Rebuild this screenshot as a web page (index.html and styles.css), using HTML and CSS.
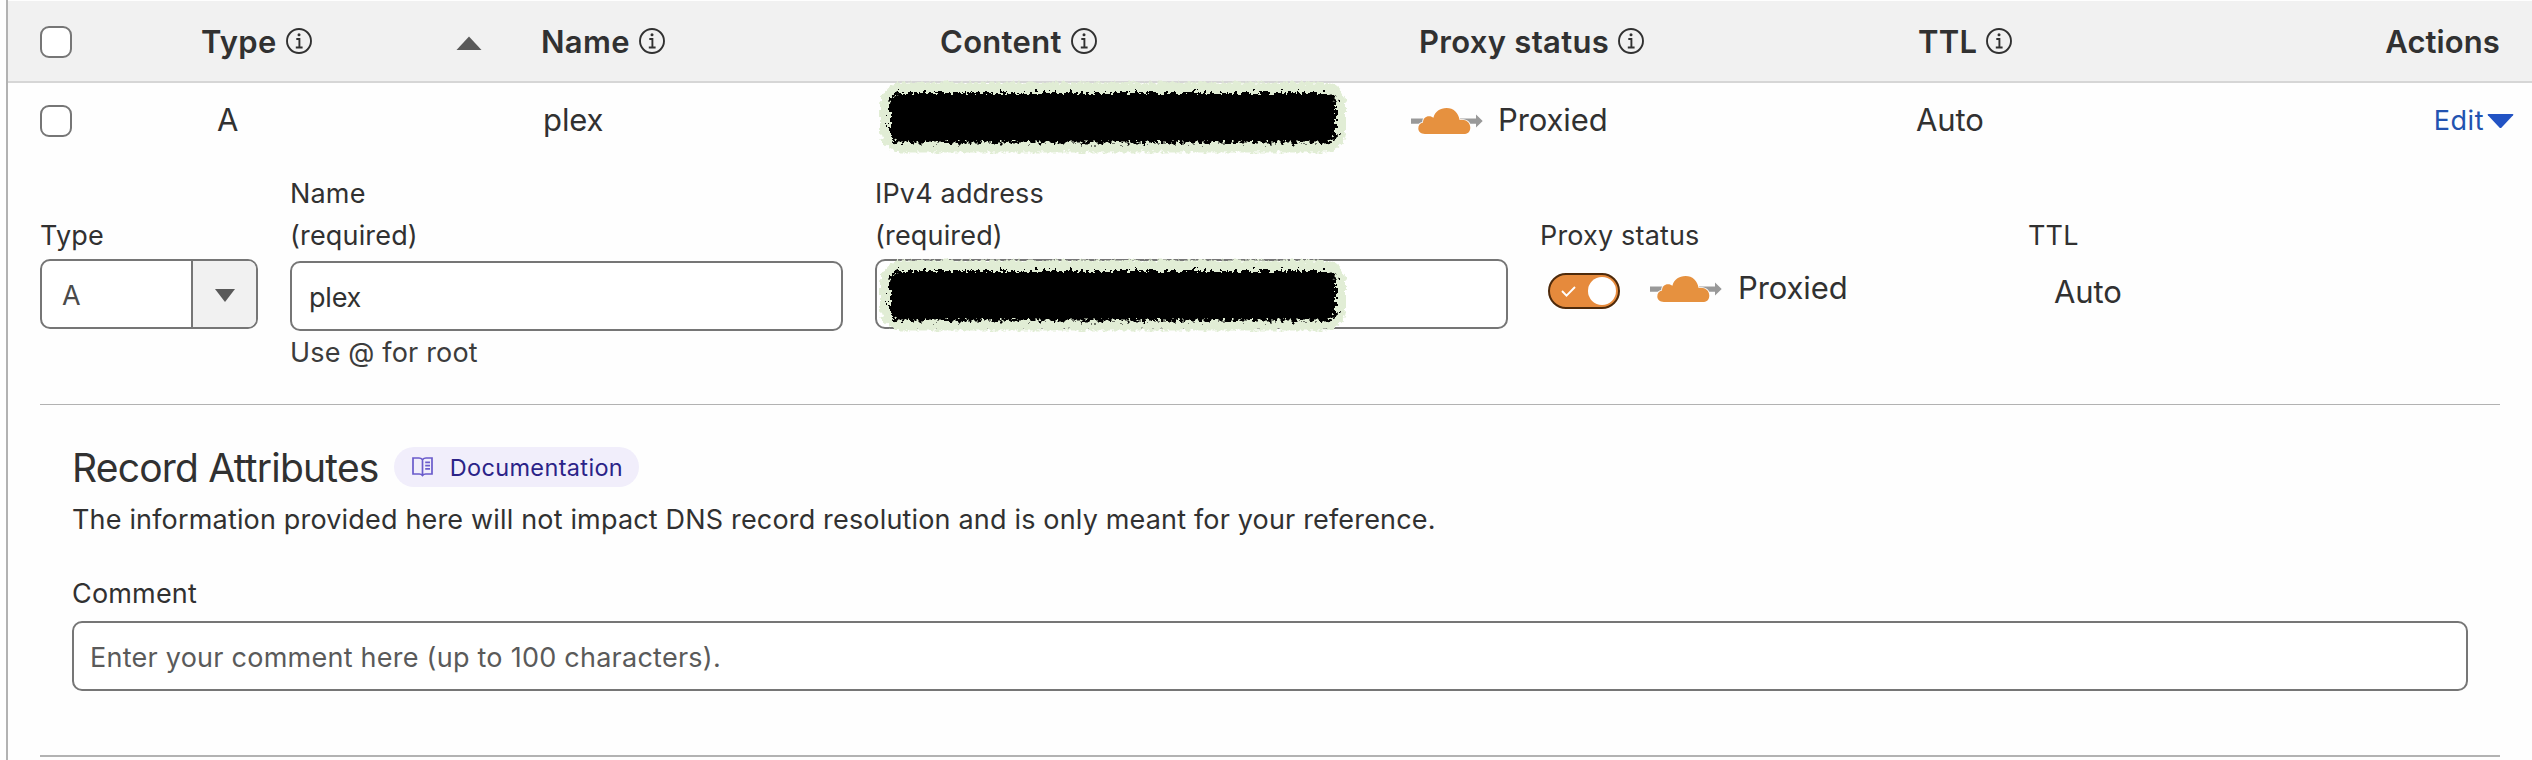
FILE: index.html
```html
<!DOCTYPE html>
<html lang="en">
<head>
<meta charset="utf-8">
<title>DNS records</title>
<link rel="stylesheet" href="styles.css">
</head>
<body>
<svg class="defs" width="0" height="0" aria-hidden="true">
  <defs>
    <symbol id="info" viewBox="0 0 26 26">
      <circle cx="13" cy="13" r="12" fill="none" stroke="#313131" stroke-width="1.9"/>
      <path d="M10.3 11h3.1v8.2M9.8 19.5h6.8" fill="none" stroke="#313131" stroke-width="1.9"/>
      <circle cx="13" cy="6.8" r="1.5" fill="#313131"/>
    </symbol>
    <symbol id="cloud" viewBox="0 -1 72 28">
      <path d="M0 10.5h65V6.4l6.7 6.5-6.7 6.5v-3.7H0z" fill="#999"/>
      <path d="M14 25.9C9.6 25.9 7.3 23.5 7.3 20.5C7.3 17.3 9 15 12 14.6C12 10.5 14.5 8.2 18 8.2C20 8.2 21.3 8.8 22.4 9.8C24 3.5 29 0 35.6 0C42.5 0 47.3 4.6 48.6 11.9C55 11 59.3 14.5 59.3 19.6C59.3 23 57.5 25.9 54 25.9Z" fill="#e6913f" stroke="#fff" stroke-width="1.6" paint-order="stroke"/>
    </symbol>
    <filter id="rough-edge" x="-5%" y="-25%" width="110%" height="150%" color-interpolation-filters="sRGB">
      <feTurbulence type="fractalNoise" baseFrequency="0.22" numOctaves="3" seed="4"/>
      <feDisplacementMap in="SourceGraphic" scale="8" xChannelSelector="R" yChannelSelector="G"/>
    </filter>
    <filter id="rough-core" x="-5%" y="-25%" width="110%" height="150%" color-interpolation-filters="sRGB">
      <feTurbulence type="fractalNoise" baseFrequency="0.26" numOctaves="3" seed="9"/>
      <feDisplacementMap in="SourceGraphic" scale="14" xChannelSelector="R" yChannelSelector="G"/>
    </filter>
    <symbol id="scribble" viewBox="0 0 470 74">
      <rect x="3" y="2.500" width="466" height="70" rx="22" fill="#e1edd5" filter="url(#rough-edge)"/>
      <rect x="13" y="13" width="446" height="49.500" rx="9" fill="#000" filter="url(#rough-core)"/>
      <rect x="15" y="15" width="441" height="45" rx="8" fill="#000"/>
    </symbol>
  </defs>
</svg>

<main class="panel">
  <header class="row head">
    <div class="cell check"><span class="checkbox"></span></div>
    <div class="cell type"><span>Type</span><svg class="info"><use href="#info"/></svg><svg class="sort" viewBox="0 0 26 14"><path d="M13 0.5 25.5 14H.5z" fill="#595959"/></svg></div>
    <div class="cell name"><span>Name</span><svg class="info"><use href="#info"/></svg></div>
    <div class="cell content"><span>Content</span><svg class="info"><use href="#info"/></svg></div>
    <div class="cell proxy"><span>Proxy status</span><svg class="info"><use href="#info"/></svg></div>
    <div class="cell ttl"><span>TTL</span><svg class="info"><use href="#info"/></svg></div>
    <div class="cell actions"><span>Actions</span></div>
  </header>

  <section class="row record">
    <div class="cell check"><span class="checkbox"></span></div>
    <div class="cell type"><span>A</span></div>
    <div class="cell name"><span>plex</span></div>
    <div class="cell content"><svg class="scribble"><use href="#scribble"/></svg></div>
    <div class="cell proxy"><svg class="cloud"><use href="#cloud"/></svg><span>Proxied</span></div>
    <div class="cell ttl"><span>Auto</span></div>
    <div class="cell actions"><a class="edit"><span>Edit</span><svg class="caret" viewBox="0 0 27 14"><path d="M1.5 0h24q1.500 0 .6 1.200L14.600 13.400q-1.100 1.100-2.200 0L.9 1.200Q0 0 1.500 0z" fill="#2253c4"/></svg></a></div>
  </section>

  <section class="form">
    <div class="field f-type">
      <label class="label single">Type</label>
      <div class="select"><span class="value">A</span><span class="arrow"><svg viewBox="0 0 20 13" width="20" height="13"><path d="M0 0h20L10 13z" fill="#595959"/></svg></span></div>
    </div>
    <div class="field f-name">
      <label class="label">Name<br>(required)</label>
      <div class="input">plex</div>
      <div class="help">Use @ for root</div>
    </div>
    <div class="field f-ip">
      <label class="label">IPv4 address<br>(required)</label>
      <div class="input"><svg class="scribble"><use href="#scribble"/></svg></div>
    </div>
    <div class="field f-proxy">
      <label class="label single">Proxy status</label>
      <div class="toggle-line">
        <span class="toggle"><svg class="tick" viewBox="0 0 15 11"><path d="M1 5 5.500 9.600 14 1" fill="none" stroke="#fff" stroke-width="1.9"/></svg><span class="knob"></span></span>
        <svg class="cloud"><use href="#cloud"/></svg>
        <span class="big">Proxied</span>
      </div>
    </div>
    <div class="field f-ttl">
      <label class="label single">TTL</label>
      <div class="big auto">Auto</div>
    </div>
  </section>

  <section class="attributes">
    <div class="title-line">
      <h2 class="title">Record Attributes</h2>
      <a class="pill">
        <svg class="book" viewBox="0 0 21 20"><path d="M10.500 2.600Q9 1 7 1H1v16h6.300q2 0 3.200 1.400Q11.700 17 13.700 17H20V1h-6q-2 0-3.500 1.600zM10.500 2.600v16M13.200 5.300H18M13.200 8.600H18M13.200 11.900H18" fill="none" stroke="#6a5bcb" stroke-width="1.7"/></svg>
        <span>Documentation</span>
      </a>
    </div>
    <p class="text">The information provided here will not impact DNS record resolution and is only meant for your reference.</p>
    <label class="text comment-label">Comment</label>
    <div class="input comment">Enter your comment here (up to 100 characters).</div>
  </section>
</main>
</body>
</html>
```

FILE: styles.css
```css
* { box-sizing: border-box; }

body {
  margin: 0;
  background: #fefefe;
  color: #313131;
  font-family: Inter, "Liberation Sans", sans-serif;
  font-size: 27px;
  line-height: 42px;
  letter-spacing: 0.17px;
}

.defs { display: block; position: absolute; }

.panel {
  width: 2526px;
  height: 760px;
  margin-left: 6px;
  border-left: 2px solid #b2b2b2;
  padding-top: 1px;
  overflow: hidden;
}

/* Table rows */
.row {
  display: grid;
  grid-template-columns: 160px 340px 362px 502px 512px 1fr 300px;
  padding-left: 32px;
  font-size: 31px;
  letter-spacing: 0;
}

.cell { display: flex; align-items: center; white-space: nowrap; }

.head {
  height: 82px;
  padding-top: 2px;
  background: #f1f1f1;
  border-bottom: 2px solid #d6d6d6;
  font-weight: 600;
  letter-spacing: 0.3px;
}

.head .type { padding-left: 1px; }
.head .name { padding-left: 1px; }
.head .content { padding-left: 38px; }
.head .proxy { padding-left: 15px; }
.head .ttl { padding-left: 2px; }
.head .actions { justify-content: flex-end; padding-right: 32px; letter-spacing: 0.1px; }

.record { height: 76px; }
.record .cell > span:not(.checkbox) { margin-top: -2px; }
.record .type { padding-left: 17px; }
.record .name { padding-left: 3px; }
.record .name, .record .proxy, .record .ttl, .big { letter-spacing: -0.1px; }
.record .proxy { gap: 15px; padding-left: 7px; }
.record .actions { justify-content: flex-end; padding-right: 18px; }

.checkbox {
  width: 32px;
  height: 32px;
  border: 2px solid #767676;
  border-radius: 9px;
  background: #fff;
}

.info { width: 26px; height: 26px; margin: -2px 0 0 9px; }
.sort { width: 26px; height: 14px; margin-left: 144px; margin-top: 2px; }
.cloud { width: 72px; height: 28px; flex: none; }
.scribble { width: 470px; height: 74px; flex: none; overflow: visible; }
.record .scribble { margin-top: -8px; margin-left: -25px; }

.edit { display: flex; align-items: center; color: #2253b0; font-size: 27px; letter-spacing: 0.5px; }
.caret { width: 27px; height: 14px; margin-left: 3px; }

/* Record form */
.form {
  display: flex;
  align-items: flex-start;
  height: 246px;
  margin: 0 32px;
  padding-top: 14px;
  border-bottom: 1px solid #b2b2b2;
}

.field { flex: none; }
.f-type { width: 218px; margin-right: 32px; }
.f-name { width: 553px; margin-right: 32px; }
.f-ip { width: 633px; margin-right: 32px; }
.f-proxy { width: 488px; }

.label { display: block; }
.single { padding-top: 42px; }

.input, .select {
  display: flex;
  align-items: center;
  height: 70px;
  margin-top: 2px;
  border: 2px solid #767676;
  border-radius: 10px;
  background: #fff;
}
.select { overflow: hidden; }
.input { padding: 3px 0 0 17px; }
.f-name .input { margin-top: 4px; letter-spacing: -0.2px; }
.f-ip .input { padding: 1px 0 0; }
.value { flex: 1; padding: 3px 0 0 20px; color: #4a4a4a; }
.arrow {
  display: flex;
  align-items: center;
  justify-content: center;
  width: 65px;
  height: 100%;
  padding-top: 3px;
  border-left: 2px solid #767676;
  background: #f1f1f1;
}

.help { margin-top: 1px; color: #3c3c3c; }

.toggle-line { display: flex; align-items: center; height: 42px; margin: 13px 0 0 8px; }
.toggle {
  display: flex;
  align-items: center;
  width: 72px;
  height: 36px;
  border: 2px solid #4e2a0b;
  border-radius: 18px;
  background: #e68a3c;
}
.tick { width: 15px; height: 11px; margin-left: 11px; }
.knob { width: 28px; height: 28px; margin-left: 12px; border-radius: 50%; background: #fff; }
.toggle-line .cloud { margin: -4px 16px 0 30px; }
.big { font-size: 31px; }
.toggle-line .big { margin-top: -6px; }
.auto { margin: 14px 0 0 26px; }

/* Record attributes */
.attributes {
  height: 352px;
  margin: 0 32px;
  padding: 42px 32px 0;
  border-bottom: 2px solid #b2b2b2;
}
.title-line { display: flex; align-items: center; height: 40px; }
.title {
  margin: 2px 15px 0 0;
  font-size: 39px;
  font-weight: 400;
  line-height: 40px;
  letter-spacing: -0.78px;
}
.pill {
  display: flex;
  align-items: center;
  width: 245px;
  height: 40px;
  padding-left: 18px;
  border-radius: 20px;
  background: #f1eefb;
  color: #2b2388;
  font-size: 23.5px;
  letter-spacing: 0.35px;
}
.pill span { padding-top: 1px; }
.book { width: 21px; height: 20px; margin-right: 17px; }
.text { display: block; margin: 12px 0 0; }
.comment-label { margin-top: 32px; }
.comment { margin-top: 6px; padding-left: 16px; color: #5a5a5a; letter-spacing: 0.25px; }
```
